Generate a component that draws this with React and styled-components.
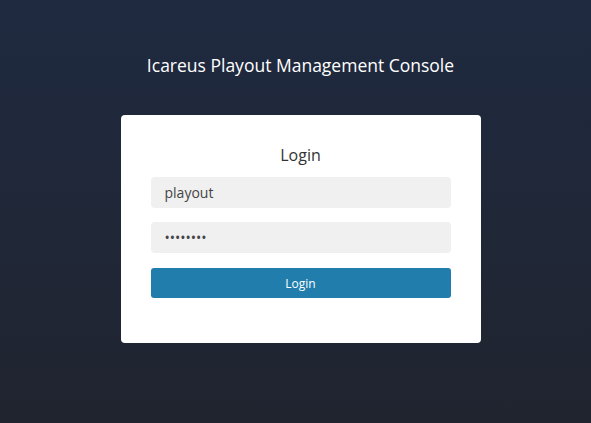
import React from 'react'
import styled, { createGlobalStyle } from 'styled-components'

const GlobalStyle = createGlobalStyle`
  html, body {
    margin: 0;
    padding: 0;
  }

  body {
    font-family: 'Open Sans', 'Liberation Sans', sans-serif;
  }
`

const Page = styled.div`
  min-height: 100vh;
  box-sizing: border-box;
  padding: 52px 0 0 10px;
  display: flex;
  flex-direction: column;
  align-items: center;
  background: linear-gradient(180deg, #1f2a40 0%, #20242f 100%);
`

const Title = styled.h1`
  margin: 0;
  font-size: 17.5px;
  line-height: 26px;
  font-weight: 400;
  color: #ffffff;
`

const Card = styled.form`
  margin-top: 37px;
  width: 360px;
  box-sizing: border-box;
  padding: 29px 30px 45px;
  background: #ffffff;
  border-radius: 4px;
  display: flex;
  flex-direction: column;
`

const Heading = styled.h2`
  margin: 0 0 11px;
  font-size: 16px;
  line-height: 22px;
  font-weight: 400;
  text-align: center;
  color: #333333;
`

const Input = styled.input`
  height: 31px;
  box-sizing: border-box;
  margin-bottom: ${props => props.gap || 0}px;
  padding: 0 14px;
  border: none;
  border-radius: 4px;
  background: #f0f0f0;
  font-family: inherit;
  font-size: 14px;
  color: #444444;
  outline: none;
`

const Button = styled.button`
  height: 30px;
  border: none;
  border-radius: 3px;
  background: #217dab;
  color: #ffffff;
  font-family: inherit;
  font-size: 12px;
  cursor: pointer;
`

export default function App() {
  return (
    <>
      <GlobalStyle />
      <Page>
        <Title>Icareus Playout Management Console</Title>
        <Card onSubmit={e => e.preventDefault()}>
          <Heading>Login</Heading>
          <Input type='text' defaultValue='playout' gap={14} />
          <Input type='password' defaultValue='password' gap={15} />
          <Button type='submit'>Login</Button>
        </Card>
      </Page>
    </>
  )
}
